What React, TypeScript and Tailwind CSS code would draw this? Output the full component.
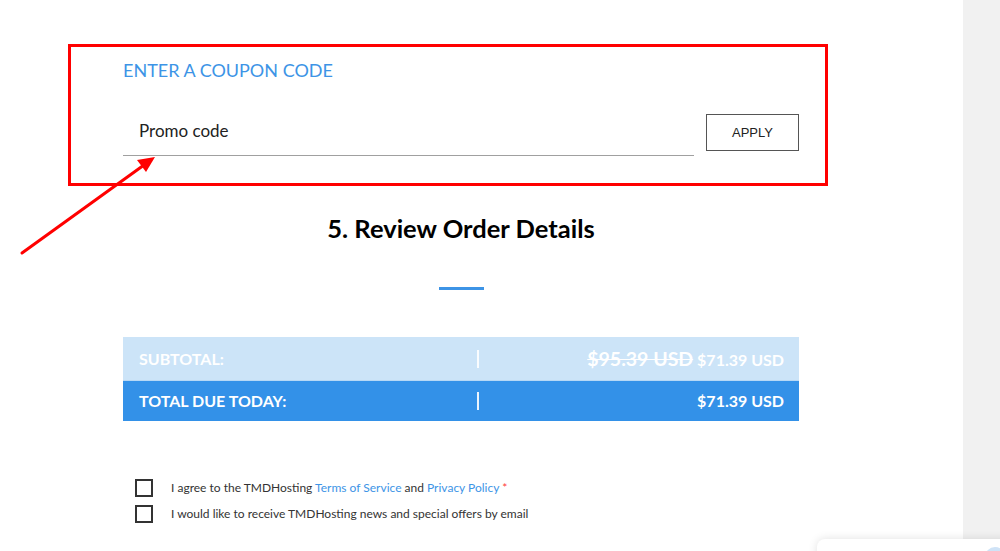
export default function App() {
  return (
    <div className="relative flex h-[551px] w-[1000px] overflow-hidden bg-white font-['Lato','Noto_Sans',sans-serif]">
      <main className="flex-1">
        {/* coupon box, highlighted */}
        <div className="ml-[68px] mt-[44px] h-[142px] w-[760px] border-[3px] border-[#ff0000] pl-[52px] pr-[26px] pt-[11px]">
          <h3 className="text-[18px] leading-[24px] text-[#3d94e6]">ENTER A COUPON CODE</h3>
          <div className="mt-[30px] flex items-start gap-[12px]">
            <input
              className="h-[44px] flex-1 border-b border-[#a0a0a0] pb-[6px] pl-[16px] text-[17px] text-[#222] outline-none placeholder:text-[#222]"
              placeholder="Promo code"
            />
            <button className="mt-[2px] h-[37px] w-[93px] border border-[#555] font-['Liberation_Sans',Arial,sans-serif] text-[13px] text-[#222]">
              APPLY
            </button>
          </div>
        </div>

        <div className="ml-[123px] w-[676px]">
          <h2 className="mt-[26px] text-center text-[25.5px] leading-[32px] font-bold text-black">5. Review Order Details</h2>
          <div className="mx-auto mt-[43px] h-[3px] w-[45px] bg-[#3d94e6]" />

          <div className="mt-[47px]">
            <div className="flex h-[43px] items-center bg-[#cce4f8] text-[16px] font-bold text-white">
              <div className="w-[354px] pl-[16px]">SUBTOTAL:</div>
              <div className="h-[18px] w-[2px] bg-white/90" />
              <div className="flex-1 pr-[15px] text-right">
                <span className="text-[19.5px] line-through">$95.39 USD</span> $71.39 USD
              </div>
            </div>
            <div className="flex h-[41px] items-center border-t border-[#b7d8f5] bg-[#3391e8] text-[16px] font-bold text-white">
              <div className="w-[354px] pl-[16px]">TOTAL DUE TODAY:</div>
              <div className="h-[18px] w-[2px] bg-white/90" />
              <div className="flex-1 pr-[15px] text-right">$71.39 USD</div>
            </div>
          </div>

          <div className="mt-[54px] pl-[12px] text-[12px] text-[#333]">
            <label className="flex h-[26px] items-center gap-[18px]">
              <span className="h-[18px] w-[18px] border-2 border-[#333]" />
              <span>
                I agree to the TMDHosting <a className="text-[#3d94e6]">Terms of Service</a> and{" "}
                <a className="text-[#3d94e6]">Privacy Policy</a> <span className="text-[#ff3b3b]">*</span>
              </span>
            </label>
            <label className="flex h-[26px] items-center gap-[18px]">
              <span className="h-[18px] w-[18px] border-2 border-[#333]" />
              <span>I would like to receive TMDHosting news and special offers by email</span>
            </label>
          </div>
        </div>
      </main>

      <aside className="w-[37px] bg-[#f1f1f1]" />

      {/* chat widget peeking in at the corner */}
      <div className="absolute left-[817px] top-[539px] h-[60px] w-[200px] rounded-lg bg-white shadow-[0_0_10px_rgba(0,0,0,0.12)]">
        <div className="absolute left-[168px] top-[8px] h-[20px] w-[20px] rounded-full bg-[#cfe3f7]" />
      </div>

      {/* red annotation arrow */}
      <svg className="pointer-events-none absolute left-0 top-0" width="1000" height="551">
        <line x1="22" y1="253" x2="144" y2="165" stroke="#ff0000" strokeWidth="3" strokeLinecap="round" />
        <polygon points="155,157 137,160 146,172" fill="#ff0000" />
      </svg>
    </div>
  );
}
